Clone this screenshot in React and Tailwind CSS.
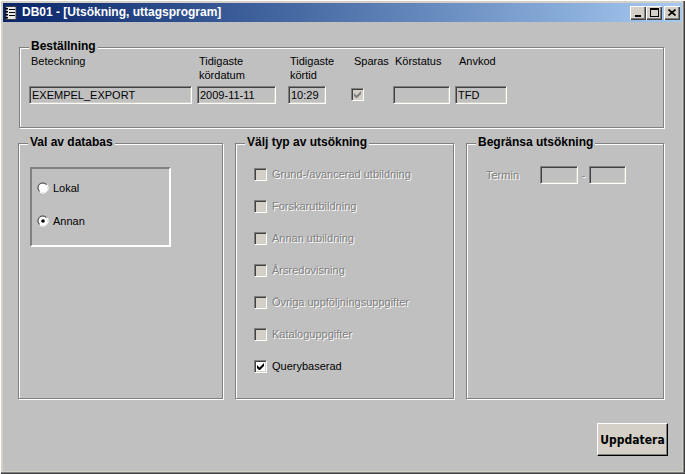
import React from "react";

const sunken =
  "border border-t-[#808080] border-l-[#808080] border-b-white border-r-white shadow-[inset_1px_1px_0_#404040,inset_-1px_-1px_0_#d4d0c8]";
const disabledText = "text-[#808080] [text-shadow:1px_1px_0_#fff]";

function Group({ title, className, children }) {
  return (
    <div
      className={`relative border border-[#808080] shadow-[1px_1px_0_#fff,inset_1px_1px_0_#fff] ${className}`}
    >
      <span className="absolute top-[-10px] left-[9px] px-[2px] bg-[#c0c0c0] font-bold text-[12px] leading-[16px] text-black">
        {title}
      </span>
      {children}
    </div>
  );
}

function Field({ value, className }) {
  return (
    <div className={`h-[18px] ${sunken} bg-[#c0c0c0] pl-[2px] text-[11px] leading-[16px] text-black ${className}`}>
      {value}
    </div>
  );
}

function Check({ checked, disabled }) {
  return (
    <div
      className={`w-[13px] h-[13px] shrink-0 ${sunken} ${disabled ? "bg-[#d4d0c8]" : "bg-white"} flex items-center justify-center`}
    >
      {checked && (
        <svg width="7" height="7" viewBox="0 0 7 7">
          <path
            d="M0 2v3l2 2h1l4-4V0L2.5 4.5z"
            fill={disabled ? "#808080" : "#000"}
          />
        </svg>
      )}
    </div>
  );
}

function Radio({ checked }) {
  return (
    <svg width="12" height="12" viewBox="0 0 12 12" className="shrink-0">
      <path d="M2 9.5A5.5 5.5 0 0 1 9.5 2" stroke="#808080" strokeWidth="1" fill="none" transform="translate(0.3 0.3)" />
      <circle cx="6" cy="6" r="4.5" fill="#fff" />
      <path d="M2.3 9A4.5 4.5 0 0 1 9 2.3" stroke="#404040" strokeWidth="1" fill="none" />
      <path d="M10.5 3A5.5 5.5 0 0 1 3 10.5" stroke="#fff" strokeWidth="1" fill="none" />
      {checked && <circle cx="6" cy="6" r="1.8" fill="#000" />}
    </svg>
  );
}

function TitleButton({ children, className = "" }) {
  return (
    <div
      className={`w-[16px] h-[14px] bg-[#d4d0c8] flex items-center justify-center shadow-[inset_1px_1px_0_#fff,inset_-1px_-1px_0_#404040,inset_-2px_-2px_0_#808080] ${className}`}
    >
      {children}
    </div>
  );
}

const options = [
  "Grund-/avancerad utbildning",
  "Forskarutbildning",
  "Annan utbildning",
  "Årsredovisning",
  "Övriga uppföljningsuppgifter",
  "Kataloguppgifter",
];

export default function App() {
  return (
    <div className="w-[685px] h-[474px] bg-[#d4d0c8] p-[3px] flex flex-col shadow-[inset_1px_1px_0_#fff,inset_-1px_-1px_0_#404040,inset_-2px_-2px_0_#808080] font-['Liberation_Sans',Arial,sans-serif] overflow-hidden">
      {/* title bar */}
      <div className="h-[19px] shrink-0 flex items-center bg-gradient-to-r from-[#0a246a] to-[#a6caf0] pl-[2px] pr-[2px]">
        <svg width="12" height="14" viewBox="0 0 12 14" className="shrink-0">
          <rect x="1" y="0.5" width="10" height="13" fill="#e8e8e8" stroke="#404040" />
          <rect x="0" y="2" width="3" height="1.5" fill="#000" />
          <rect x="0" y="5" width="3" height="1.5" fill="#000" />
          <rect x="0" y="8" width="3" height="1.5" fill="#000" />
          <rect x="0" y="11" width="3" height="1.5" fill="#000" />
          <rect x="4" y="3" width="6" height="1" fill="#000" />
          <rect x="4" y="6" width="6" height="1" fill="#000" />
          <rect x="4" y="9" width="6" height="1" fill="#000" />
        </svg>
        <span className="ml-[5px] text-white font-bold text-[12px] leading-[19px] whitespace-nowrap">
          DB01 - [Utsökning, uttagsprogram]
        </span>
        <div className="ml-auto flex items-center">
          <TitleButton>
            <svg width="8" height="8" viewBox="0 0 8 8">
              <rect x="1" y="6" width="6" height="2" fill="#000" />
            </svg>
          </TitleButton>
          <TitleButton>
            <svg width="9" height="9" viewBox="0 0 9 9">
              <rect x="0.5" y="0.5" width="8" height="8" fill="none" stroke="#000" />
              <rect x="0" y="0" width="9" height="2" fill="#000" />
            </svg>
          </TitleButton>
          <TitleButton className="ml-[2px]">
            <svg width="8" height="7" viewBox="0 0 8 7">
              <path d="M0.5 0.5l7 6M7.5 0.5l-7 6" stroke="#000" strokeWidth="1.6" />
            </svg>
          </TitleButton>
        </div>
      </div>

      {/* body */}
      <div className="flex-1 bg-[#c0c0c0] flex flex-col">
        <Group title="Beställning" className="mt-[25px] ml-[16px] w-[645px] h-[81px]">
          <div className="flex pl-[9px] pt-[6px] text-[11px] leading-[14px] text-black">
            <div className="w-[163px] flex flex-col">
              <div className="h-[32px] pl-[2px]">Beteckning</div>
              <Field value="EXEMPEL_EXPORT" />
            </div>
            <div className="w-[79px] ml-[5px] flex flex-col">
              <div className="h-[32px] pl-[2px]">Tidigaste<br />kördatum</div>
              <Field value="2009-11-11" />
            </div>
            <div className="w-[38px] ml-[12px] flex flex-col">
              <div className="h-[32px] pl-[2px]">Tidigaste<br />körtid</div>
              <Field value="10:29" />
            </div>
            <div className="w-[42px] ml-[25px] flex flex-col">
              <div className="h-[32px] pl-[3px] whitespace-nowrap">Sparas</div>
              <div className="mt-[2px]">
                <Check checked disabled />
              </div>
            </div>
            <div className="w-[57px] flex flex-col">
              <div className="h-[32px] pl-[2px] whitespace-nowrap">Körstatus</div>
              <Field value="" />
            </div>
            <div className="w-[52px] ml-[5px] flex flex-col">
              <div className="h-[32px] pl-[4px]">Anvkod</div>
              <Field value="TFD" />
            </div>
          </div>
        </Group>

        <div className="flex mt-[15px]">
          <Group title="Val av databas" className="ml-[15px] w-[205px] h-[256px]">
            <div className="ml-[11px] mt-[23px] w-[141px] h-[80px] border-2 border-t-[#808080] border-l-[#808080] border-b-white border-r-white pl-[5px] pt-[13px] flex flex-col gap-[21px] text-[11px] leading-[12px] text-black">
              <div className="flex items-center gap-[4px]">
                <Radio />
                <span>Lokal</span>
              </div>
              <div className="flex items-center gap-[4px]">
                <Radio checked />
                <span>Annan</span>
              </div>
            </div>
          </Group>

          <Group title="Välj typ av utsökning" className="ml-[12px] w-[219px] h-[256px]">
            <div className="pl-[18px] pt-[24px] flex flex-col gap-[19px] text-[11px] leading-[13px]">
              {options.map((o) => (
                <div key={o} className="flex items-center gap-[5px]">
                  <Check disabled />
                  <span className={`whitespace-nowrap ${disabledText}`}>{o}</span>
                </div>
              ))}
              <div className="flex items-center gap-[5px]">
                <Check checked />
                <span className="whitespace-nowrap text-black">Querybaserad</span>
              </div>
            </div>
          </Group>

          <Group title="Begränsa utsökning" className="ml-[12px] w-[198px] h-[256px]">
            <div className="pl-[19px] pt-[22px] flex items-center text-[11px]">
              <span className={`w-[54px] ${disabledText}`}>Termin</span>
              <Field value="" className="w-[38px]" />
              <span className={`w-[11px] text-center ${disabledText}`}>-</span>
              <Field value="" className="w-[37px]" />
            </div>
          </Group>
        </div>

        <button className="self-end mr-[14px] mt-[24px] w-[71px] h-[33px] bg-[#d4d0c8] border border-t-white border-l-white border-b-black border-r-black shadow-[inset_-1px_-1px_0_#808080] font-['DejaVu_Sans_Condensed','DejaVu_Sans',sans-serif] [font-stretch:condensed] font-bold text-[12px] text-black">
          Uppdatera
        </button>
      </div>
    </div>
  );
}
